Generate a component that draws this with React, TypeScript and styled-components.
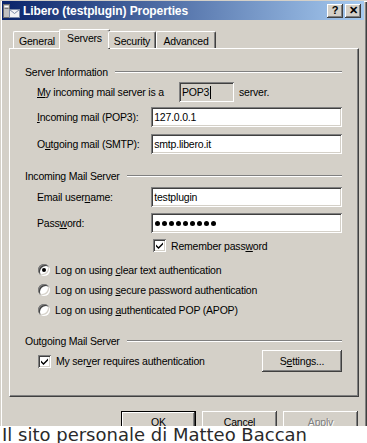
import React, { useState } from 'react'
import styled, { createGlobalStyle } from 'styled-components'

const GlobalStyle = createGlobalStyle`
  html, body {
    margin: 0;
    padding: 0;
    background: #ffffff;
  }
  body {
    font-family: "Liberation Sans", Arial, sans-serif;
  }
`

const raised = `
  box-shadow: inset -1px -1px #404040, inset 1px 1px #ffffff,
    inset -2px -2px #808080, inset 2px 2px #d4d0c8;
`

const sunken = `
  box-shadow: inset 1px 1px #808080, inset -1px -1px #ffffff,
    inset 2px 2px #404040, inset -2px -2px #d4d0c8;
`

const App = () => {
  const [auth, setAuth] = useState('clear')
  const [remember, setRemember] = useState(true)
  const [needAuth, setNeedAuth] = useState(true)

  return (
    <>
      <GlobalStyle />
      <Window>
        <TitleBar>
          <TitleIcon />
          <TitleText>Libero (testplugin) Properties</TitleText>
          <CaptionButton>?</CaptionButton>
          <CaptionButton $gap={2}>✕</CaptionButton>
        </TitleBar>
        <Body>
          <TabStrip>
            <Tab $width={48}>General</Tab>
            <Tab $width={51} $active>Servers</Tab>
            <Tab $width={48}>Security</Tab>
            <Tab $width={60}>Advanced</Tab>
          </TabStrip>
          <Panel>
            <GroupHeader>
              <span>Server Information</span>
              <Etch />
            </GroupHeader>
            <Row $top={4}>
              <Label $width={142}><u>M</u>y incoming mail server is a</Label>
              <Field $width={55} $readonly>POP3<Caret /></Field>
              <Label $width={50} $pad={5}>server.</Label>
            </Row>
            <Row $top={5}>
              <Label $width={115}><u>I</u>ncoming mail (POP3):</Label>
              <Field $width={192}>127.0.0.1</Field>
            </Row>
            <Row $top={7}>
              <Label $width={115}>O<u>u</u>tgoing mail (SMTP):</Label>
              <Field $width={192}>smtp.libero.it</Field>
            </Row>

            <GroupHeader $top={15}>
              <span>Incoming Mail Server</span>
              <Etch />
            </GroupHeader>
            <Row $top={5}>
              <Label $width={115}>Email user<u>n</u>ame:</Label>
              <Field $width={192}>testplugin</Field>
            </Row>
            <Row $top={6}>
              <Label $width={115}>Pass<u>w</u>ord:</Label>
              <Field $width={192}>
                <Dots>
                  {Array.from({ length: 9 }).map((_, i) => <Dot key={i} />)}
                </Dots>
              </Field>
            </Row>
            <CheckRow $top={6} $indent={116} onClick={() => setRemember(!remember)}>
              <CheckBox>{remember && <CheckMark />}</CheckBox>
              <span>Remember pass<u>w</u>ord</span>
            </CheckRow>
            <CheckRow $top={11} $indent={1} onClick={() => setAuth('clear')}>
              <Radio $checked={auth === 'clear'} />
              <span>Log on using <u>c</u>lear text authentication</span>
            </CheckRow>
            <CheckRow $top={7} $indent={1} onClick={() => setAuth('spa')}>
              <Radio $checked={auth === 'spa'} />
              <span>Log on using <u>s</u>ecure password authentication</span>
            </CheckRow>
            <CheckRow $top={7} $indent={1} onClick={() => setAuth('apop')}>
              <Radio $checked={auth === 'apop'} />
              <span>Log on using <u>a</u>uthenticated POP (APOP)</span>
            </CheckRow>

            <GroupHeader $top={18}>
              <span>Outgoing Mail Server</span>
              <Etch />
            </GroupHeader>
            <Row $top={3} $height={22}>
              <CheckLabel $indent={1} onClick={() => setNeedAuth(!needAuth)}>
                <CheckBox>{needAuth && <CheckMark />}</CheckBox>
                <span>My ser<u>v</u>er requires authentication</span>
              </CheckLabel>
              <PushButton $width={80} $height={22}>S<u>e</u>ttings...</PushButton>
            </Row>
          </Panel>
          <ButtonRow>
            <DefaultButton>OK</DefaultButton>
            <PushButton $width={75} $height={21}>Cancel</PushButton>
            <PushButton $width={75} $height={21} $disabled><u>A</u>pply</PushButton>
          </ButtonRow>
        </Body>
      </Window>
      <SiteCaption>Il sito personale di Matteo Baccan</SiteCaption>
    </>
  )
}

const TitleIcon = () => (
  <svg width="17" height="16" viewBox="0 0 17 16">
    <rect x="0.5" y="1.5" width="6" height="13" fill="#c0c0c0" stroke="#6d6d6d" />
    <rect x="1.5" y="3" width="4" height="1" fill="#ffffff" />
    <rect x="1.5" y="5" width="4" height="1" fill="#7a7a7a" />
    <rect x="6.5" y="6.5" width="10" height="8" fill="#f4f4f4" stroke="#7d8ca8" />
    <path d="M6.5 6.5 L11.5 10.5 L16.5 6.5" fill="none" stroke="#7d8ca8" />
  </svg>
)

const CheckMark = () => (
  <svg width="9" height="9" viewBox="0 0 9 9">
    <path d="M1 3.5 L3.5 6 L8 1.5 L8 3.5 L3.5 8 L1 5.5 Z" fill="#000" />
  </svg>
)

const Window = styled.div`
  width: 367px;
  height: 426px;
  box-sizing: border-box;
  padding: 1px 3px 0 2px;
  background: #d4d0c8;
  overflow: hidden;
  box-shadow: inset 1px 1px #d4d0c8, inset 2px 2px #ffffff,
    inset -1px 0 #404040, inset -2px 0 #808080;
  font-size: 10.5px;
  letter-spacing: -0.2px;
  color: #000;
`

const TitleBar = styled.div`
  height: 19px;
  display: flex;
  align-items: center;
  padding: 0 3px 0 1px;
  background: linear-gradient(to right, #0a246a, #a6caf0);
  letter-spacing: 0;
`

const TitleText = styled.div`
  flex: 1;
  margin-left: 3px;
  color: #ffffff;
  font-weight: bold;
  font-size: 12px;
  letter-spacing: -0.1px;
`

const CaptionButton = styled.div<{ $gap?: number }>`
  width: 16px;
  height: 14px;
  margin-left: ${p => p.$gap ?? 0}px;
  display: flex;
  align-items: center;
  justify-content: center;
  background: #d4d0c8;
  font-weight: bold;
  font-size: 11px;
  line-height: 1;
  ${raised}
`

const Body = styled.div`
  padding: 0 6px 0 7px;
`

const TabStrip = styled.div`
  display: flex;
  align-items: flex-end;
  height: 19px;
  margin-top: 9px;
  padding-left: 2px;
  position: relative;
  z-index: 1;
`

const Tab = styled.div<{ $width: number; $active?: boolean }>`
  width: ${p => p.$width}px;
  height: ${p => (p.$active ? 20 : 17)}px;
  box-sizing: border-box;
  margin: 0 ${p => (p.$active ? -2 : 0)}px ${p => (p.$active ? -1 : 0)}px;
  padding-top: ${p => (p.$active ? 2 : 3)}px;
  text-align: center;
  background: #d4d0c8;
  border-top: 1px solid #ffffff;
  border-left: 1px solid #ffffff;
  border-right: 1px solid #404040;
  border-radius: 2px 2px 0 0;
  box-shadow: inset -1px 0 #808080;
  &:first-child {
    margin-left: ${p => (p.$active ? 0 : 2)}px;
  }
`

const Panel = styled.div`
  width: 350px;
  height: 349px;
  box-sizing: border-box;
  padding: 16px 16px 0 15px;
  background: #d4d0c8;
  border-top: 1px solid #ffffff;
  border-left: 1px solid #ffffff;
  border-right: 1px solid #404040;
  border-bottom: 1px solid #404040;
  box-shadow: inset -1px -1px #808080;
  display: flex;
  flex-direction: column;
`

const GroupHeader = styled.div<{ $top?: number }>`
  display: flex;
  align-items: center;
  height: 13px;
  margin-top: ${p => p.$top ?? 0}px;
  white-space: nowrap;
`

const Etch = styled.div`
  flex: 1;
  height: 0;
  margin-left: 7px;
  border-top: 1px solid #808080;
  border-bottom: 1px solid #ffffff;
`

const Row = styled.div<{ $top: number; $height?: number }>`
  display: flex;
  align-items: center;
  height: ${p => p.$height ?? 20}px;
  margin-top: ${p => p.$top}px;
  padding-left: 12px;
`

const Label = styled.div<{ $width: number; $pad?: number }>`
  width: ${p => p.$width}px;
  padding-left: ${p => p.$pad ?? 0}px;
  white-space: nowrap;
`

const Field = styled.div<{ $width: number; $readonly?: boolean }>`
  width: ${p => p.$width}px;
  height: 20px;
  box-sizing: border-box;
  padding: 0 3px;
  display: flex;
  align-items: center;
  background: ${p => (p.$readonly ? '#d4d0c8' : '#ffffff')};
  ${sunken}
`

const Caret = styled.span`
  display: inline-block;
  width: 1px;
  height: 13px;
  margin-left: 1px;
  background: #000;
`

const Dots = styled.div`
  display: flex;
  gap: 2px;
  padding-left: 1px;
`

const Dot = styled.span`
  width: 5px;
  height: 5px;
  border-radius: 50%;
  background: #000;
`

const CheckRow = styled.div<{ $top: number; $indent: number }>`
  display: flex;
  align-items: center;
  gap: 5px;
  height: 13px;
  margin-top: ${p => p.$top}px;
  padding-left: ${p => 12 + p.$indent}px;
  cursor: default;
`

const CheckLabel = styled.div<{ $indent: number }>`
  flex: 1;
  display: flex;
  align-items: center;
  gap: 5px;
  padding-left: ${p => p.$indent}px;
`

const CheckBox = styled.div`
  width: 13px;
  height: 13px;
  box-sizing: border-box;
  display: flex;
  align-items: center;
  justify-content: center;
  background: #ffffff;
  ${sunken}
`

const Radio = styled.div<{ $checked: boolean }>`
  width: 12px;
  height: 12px;
  border-radius: 50%;
  background: #ffffff;
  position: relative;
  box-shadow: inset 1px 1px #808080, inset -1px -1px #ffffff,
    inset 2px 2px #404040, inset -2px -2px #d4d0c8;
  &::after {
    content: '';
    display: ${p => (p.$checked ? 'block' : 'none')};
    position: absolute;
    left: 4px;
    top: 4px;
    width: 4px;
    height: 4px;
    border-radius: 50%;
    background: #000;
  }
`

const PushButton = styled.div<{ $width: number; $height: number; $disabled?: boolean }>`
  width: ${p => p.$width}px;
  height: ${p => p.$height}px;
  box-sizing: border-box;
  display: flex;
  align-items: center;
  justify-content: center;
  background: #d4d0c8;
  color: ${p => (p.$disabled ? '#808080' : '#000')};
  text-shadow: ${p => (p.$disabled ? '1px 1px #ffffff' : 'none')};
  ${raised}
`

const DefaultButton = styled.div`
  width: 75px;
  height: 21px;
  box-sizing: border-box;
  display: flex;
  align-items: center;
  justify-content: center;
  background: #d4d0c8;
  border: 1px solid #000;
  ${raised}
`

const ButtonRow = styled.div`
  display: flex;
  justify-content: flex-end;
  gap: 6px;
  margin-top: 14px;
`

const SiteCaption = styled.div`
  height: 17px;
  padding-left: 2px;
  font-family: "DejaVu Sans", sans-serif;
  font-size: 18px;
  line-height: 17px;
  color: #2a2a2a;
  white-space: nowrap;
`

export default App
